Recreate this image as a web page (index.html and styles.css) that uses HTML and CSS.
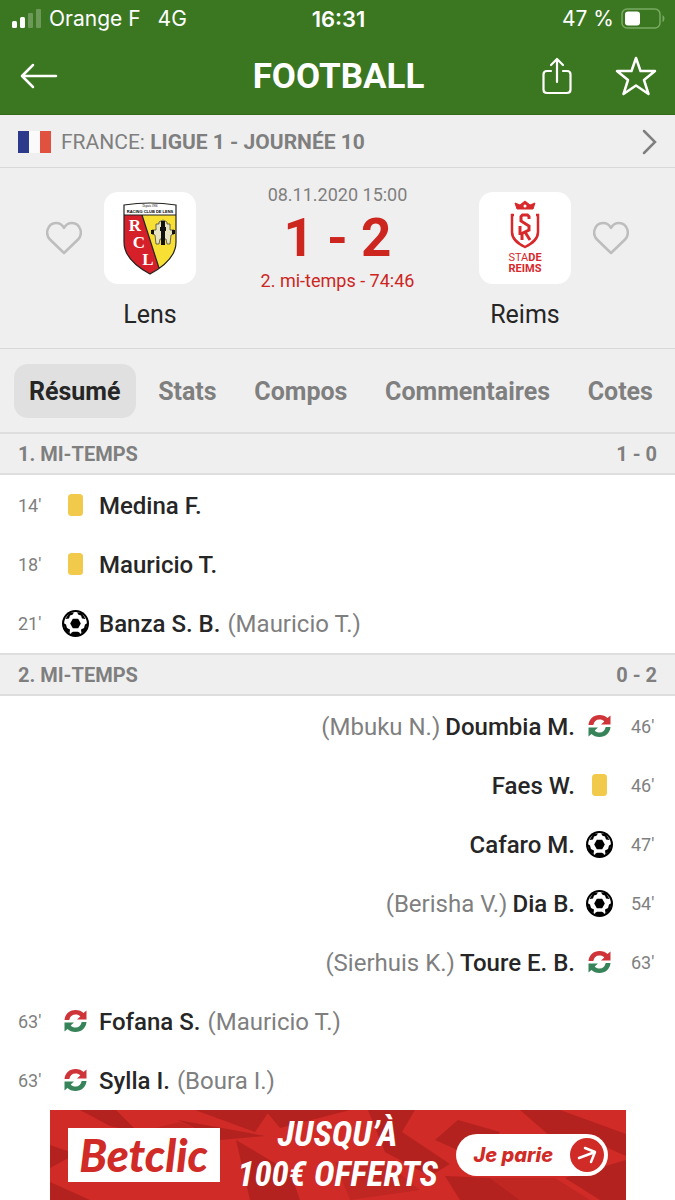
FILE: index.html
```html
<!DOCTYPE html>
<html lang="fr">

<head>
    <meta charset="UTF-8">
    <meta name="viewport" content="width=device-width, initial-scale=1.0">
    <title>Lens - Reims</title>
    <link rel="stylesheet" href="styles.css">
</head>

<body>
    <!-- shared icons -->
    <svg class="sprite" aria-hidden="true">
        <symbol id="ball" viewBox="0 0 27 27">
            <circle cx="13.5" cy="13.5" r="13.5" fill="#000" />
            <circle cx="13.5" cy="13.5" r="11.4" fill="#fff" />
            <path d="M10.800 8.800H16.200L18.800 13.500 16.200 18.200H10.800L8.200 13.500Z" />
            <path d="M7.500 2.500 12 2.500 10.500 4.800 8 5.500 7 8.500 3.500 9ZM19.500 2.500 15 2.500 16.500 4.800 19 5.500 20 8.500 23.500 9ZM1.500 13 4 14.500 5 18 8 19.500 7.500 23.500 3 20ZM25.500 13 23 14.500 22 18 19 19.500 19.500 23.500 24 20ZM11 21.800H16L18 23 17.500 26H9.500L9 23Z" />
        </symbol>
        <symbol id="swap" viewBox="0 0 22 22">
            <path d="M0 10C.5 4 5 0 11 0 14.500 0 17 1 19 3L22 .5V9.500H12.500L15.800 6.500C14.500 5 13 4.500 11 4.500 7.500 4.500 5.500 6.500 4.800 10Z" fill="#cf3439" />
            <path d="M22 12C21.500 18 17 22 11 22 7.500 22 5 21 3 19L0 21.500V12.500H9.500L6.200 15.500C7.500 17 9 17.500 11 17.500 14.500 17.500 16.500 15.500 17.200 12Z" fill="#38845a" />
        </symbol>
        <symbol id="card" viewBox="0 0 15 22">
            <rect width="15" height="22" rx="3.500" fill="#f1c94b" />
        </symbol>
        <symbol id="heart" viewBox="0 0 36 34">
            <path d="M18 32 4 18.500C1 15.500 1 11 1.500 9 2.800 4.500 6 2 10 2 13.500 2 16.500 4 18 7 19.500 4 22.500 2 26 2 30 2 33.200 4.500 34.500 9 35 11 35 15.500 32 18.500Z" fill="none" stroke="#bdbdbd" stroke-width="2.500" stroke-linejoin="round" />
        </symbol>
    </svg>

    <header class="header">
        <div class="status">
            <div class="status-side">
                <svg width="30" height="19" viewBox="0 0 30 19" fill="#fff">
                    <rect y="12" width="5" height="7" rx="1.500" />
                    <rect x="8" y="8" width="5" height="11" rx="1.500" />
                    <rect x="16" y="4" width="5" height="15" rx="1" opacity=".25" />
                    <rect x="24" width="5" height="19" rx="1" opacity=".25" />
                </svg>
                <span class="carrier">Orange F</span>
                <span>4G</span>
            </div>
            <b class="clock">16:31</b>
            <div class="status-side status-right">
                <span>47 %</span>
                <svg width="44" height="21" viewBox="0 0 44 21">
                    <rect x="1" y="1" width="38" height="19" rx="5" fill="none" stroke="#79aa62" stroke-width="1.500" />
                    <rect x="4" y="3.500" width="15" height="14" rx="3" fill="#fff" />
                    <path d="M41.500 7V14Q43.500 13 43.500 10.500T41.500 7Z" fill="#79aa62" />
                </svg>
            </div>
        </div>
        <div class="titlebar">
            <button class="icon-btn back" aria-label="Retour">
                <svg width="38" height="26" viewBox="0 0 38 26" fill="none" stroke="#fff" stroke-width="2.500" stroke-linecap="round" stroke-linejoin="round">
                    <path d="M13 2 2 13 13 24M2 13H36" />
                </svg>
            </button>
            <h1>FOOTBALL</h1>
            <div class="actions">
                <button class="icon-btn" aria-label="Partager">
                    <svg width="30" height="38" viewBox="0 0 30 38" fill="none" stroke="#fff" stroke-width="2.200" stroke-linecap="round" stroke-linejoin="round">
                        <path d="M9 14H5Q1.500 14 1.500 17.500V32.500Q1.500 36 5 36H25Q28.500 36 28.500 32.500V17.500Q28.500 14 25 14H21M15 25V2M9 8 15 2 21 8" />
                    </svg>
                </button>
                <button class="icon-btn" aria-label="Favori">
                    <svg width="42" height="42" viewBox="0 0 42 42" fill="none" stroke="#fff" stroke-width="2.500" stroke-linejoin="round">
                        <path d="M21 3 25.500 16H40L29 25 33.500 39 21 30.500 8.500 39 13 25 2 16H16.500Z" />
                    </svg>
                </button>
            </div>
        </div>
    </header>

    <a class="league" href="#">
        <svg width="33" height="22" viewBox="0 0 33 22">
            <rect width="33" height="22" fill="#fafafa" />
            <rect width="11" height="22" fill="#2c3a8c" />
            <rect x="22" width="11" height="22" fill="#e0523f" />
        </svg>
        <span class="league-name">FRANCE: <b>LIGUE 1 - JOURNÉE 10</b></span>
        <svg width="16" height="26" viewBox="0 0 16 26" fill="none" stroke="#7f7f7f" stroke-width="2.500" stroke-linecap="round">
            <path d="M2 2 13 13 2 24" />
        </svg>
    </a>

    <section class="match">
        <button class="icon-btn heart" aria-label="Suivre Lens"><svg width="36" height="34"><use href="#heart" /></svg></button>
        <div class="team">
            <div class="crest">
                <svg width="54" height="73" viewBox="0 0 54 73">
                    <path d="M1 3Q27-1 53 3V40C53 55 40 65 27 72 14 65 1 55 1 40Z" fill="#f8df34" />
                    <path d="M1 13H19L36 66 27 72C14 65 1 55 1 40Z" fill="#d5202a" />
                    <path d="M1 3Q27-1 53 3V13H1Z" fill="#fff" />
                    <path d="M1 13H53M19 13 36 66M1 3Q27-1 53 3V40C53 55 40 65 27 72 14 65 1 55 1 40Z" fill="none" stroke="#222" stroke-width="1.200" />
                    <text x="27" y="5" class="lens-since">Depuis 1906</text>
                    <text x="27" y="11" class="lens-name">RACING CLUB DE LENS</text>
                    <text x="12" y="29" class="lens-letter">R</text>
                    <text x="16" y="46" class="lens-letter">C</text>
                    <text x="25" y="63" class="lens-letter">L</text>
                    <path d="M36 20 40 18 44 20V22H47V28H51V32L48 33 47 42H44L43 37H37L36 42H33L32 33 29 32V28H33V22H36Z" fill="#e9e4c0" stroke="#444" stroke-width=".8" />
                    <path d="M38 19H42V25H43V29H42V43H38V29H37V25H38ZM28 28H31V32H28ZM49 28H52V32H49Z" fill="#111" />
                </svg>
            </div>
            <span class="team-name">Lens</span>
        </div>
        <div class="score">
            <span class="date">08.11.2020 15:00</span>
            <b class="result">1 - 2</b>
            <span class="period">2. mi-temps - 74:46</span>
        </div>
        <div class="team">
            <div class="crest">
                <svg width="40" height="76" viewBox="0 0 40 76" fill="none" stroke="#d7282b">
                    <path d="M12 9 10 3 15 5 20 1 25 5 30 3 28 9Z" fill="#d7282b" stroke-width="1" />
                    <circle cx="20" cy="6" r="1.500" fill="#fff" stroke="none" />
                    <path d="M9 15H7V32C7 39 12 43 20 47 28 43 33 39 33 32V15H31" stroke-width="2.500" />
                    <path d="M24 19V16.500L22.500 15H17.500L16 16.500V21L24 26V30L17 33.500V40M15 26V35M20 32 25 40" stroke-width="3" />
                    <text x="20" y="61" class="stade">STA<tspan font-weight="700">DE</tspan></text>
                    <text x="20" y="72" class="stade stade-reims">REIMS</text>
                </svg>
            </div>
            <span class="team-name">Reims</span>
        </div>
        <button class="icon-btn heart" aria-label="Suivre Reims"><svg width="36" height="34"><use href="#heart" /></svg></button>
    </section>

    <nav class="tabs">
        <a class="tab active" href="#">Résumé</a>
        <a class="tab" href="#">Stats</a>
        <a class="tab" href="#">Compos</a>
        <a class="tab" href="#">Commentaires</a>
        <a class="tab" href="#">Cotes</a>
    </nav>

    <main>
        <h2 class="half"><span>1. MI-TEMPS</span><span>1 - 0</span></h2>
        <ul class="events">
            <li class="event">
                <span class="minute">14'</span>
                <svg class="icon"><use href="#card" height="22" y="2" /></svg>
                <span class="player">Medina F.</span>
            </li>
            <li class="event">
                <span class="minute">18'</span>
                <svg class="icon"><use href="#card" height="22" y="2" /></svg>
                <span class="player">Mauricio T.</span>
            </li>
            <li class="event">
                <span class="minute">21'</span>
                <svg class="icon"><use href="#ball" /></svg>
                <span class="player">Banza S. B.</span>
                <span class="other">(Mauricio T.)</span>
            </li>
        </ul>

        <h2 class="half"><span>2. MI-TEMPS</span><span>0 - 2</span></h2>
        <ul class="events">
            <li class="event away">
                <span class="minute">46'</span>
                <svg class="icon"><use href="#swap" height="22" y="2" /></svg>
                <span class="player">Doumbia M.</span>
                <span class="other">(Mbuku N.)</span>
            </li>
            <li class="event away">
                <span class="minute">46'</span>
                <svg class="icon"><use href="#card" height="22" y="2" /></svg>
                <span class="player">Faes W.</span>
            </li>
            <li class="event away">
                <span class="minute">47'</span>
                <svg class="icon"><use href="#ball" /></svg>
                <span class="player">Cafaro M.</span>
            </li>
            <li class="event away">
                <span class="minute">54'</span>
                <svg class="icon"><use href="#ball" /></svg>
                <span class="player">Dia B.</span>
                <span class="other">(Berisha V.)</span>
            </li>
            <li class="event away">
                <span class="minute">63'</span>
                <svg class="icon"><use href="#swap" height="22" y="2" /></svg>
                <span class="player">Toure E. B.</span>
                <span class="other">(Sierhuis K.)</span>
            </li>
            <li class="event">
                <span class="minute">63'</span>
                <svg class="icon"><use href="#swap" height="22" y="2" /></svg>
                <span class="player">Fofana S.</span>
                <span class="other">(Mauricio T.)</span>
            </li>
            <li class="event">
                <span class="minute">63'</span>
                <svg class="icon"><use href="#swap" height="22" y="2" /></svg>
                <span class="player">Sylla I.</span>
                <span class="other">(Boura I.)</span>
            </li>
        </ul>
    </main>

    <aside class="ad">
        <svg class="ad-bg" viewBox="0 0 576 90" preserveAspectRatio="none" aria-hidden="true">
            <path d="M30 0H66L88 22 60 16ZM0 35 26 44 0 58ZM128 10 215 26 170 30ZM145 0H220L205 22ZM186 30 240 62 250 90H200ZM0 72 40 90H0ZM215 0H300L230 18ZM318 0H365L352 22 400 54 380 66 335 42ZM408 10 450 22 430 50 385 30ZM470 0H510L576 24V46L540 30 500 26ZM395 66 440 68 470 90H410ZM515 68 576 50V90H550Z" fill="#b3221f" />
            <path d="M88 22 130 12 170 30 100 28ZM285 52 335 52 370 80 300 90ZM440 68 505 68 540 90H470Z" fill="#c02722" />
        </svg>
        <span class="ad-logo">Betclic</span>
        <span class="ad-text">JUSQU’À<br>100€ OFFERTS</span>
        <button class="ad-btn">Je parie
            <svg width="34" height="34" viewBox="0 0 34 34">
                <circle cx="17" cy="17" r="17" fill="#d02b27" />
                <path d="M9 20 25 14M15 10 25 14 21 24" fill="none" stroke="#fff" stroke-width="2.500" stroke-linecap="round" stroke-linejoin="round" />
            </svg>
        </button>
    </aside>
</body>

</html>
```
FILE: styles.css
```css
* {
    box-sizing: border-box;
}

body {
    margin: 0;
    min-height: 100vh;
    display: flex;
    flex-direction: column;
    font-family: Roboto, "Liberation Sans", sans-serif;
    color: #262626;
    background-color: #fff;
}

svg {
    display: block;
    flex: none;
}

.sprite {
    display: none;
}

a {
    color: inherit;
    text-decoration: none;
}

.icon-btn {
    padding: 0;
    border: 0;
    background: none;
}

.header {
    height: 115px;
    color: #fff;
    background-color: #3b7721;
    border-bottom: 1px solid #33691c;
}

.status {
    height: 37px;
    padding: 0 10px 0 12px;
    display: grid;
    grid-template-columns: 1fr auto 1fr;
    align-items: center;
    font-family: Inter, sans-serif;
    font-size: 21px;
}

.status-side {
    display: flex;
    align-items: center;
    gap: 7px;
}

.carrier {
    margin-right: 10px;
}

.status-right {
    justify-content: flex-end;
}

.clock {
    font-size: 22px;
    font-weight: 600;
}

.titlebar {
    height: 78px;
    padding: 0 18px 0 20px;
    display: grid;
    grid-template-columns: 1fr auto 1fr;
    align-items: center;
}

.back {
    justify-self: start;
}

.titlebar h1 {
    margin: 0;
    font-size: 35px;
    font-weight: 700;
}

.actions {
    display: flex;
    align-items: center;
    justify-content: flex-end;
    gap: 43px;
}

.league {
    height: 53px;
    padding: 2px 17px 0 18px;
    display: flex;
    align-items: center;
    gap: 10px;
    font-size: 21px;
    color: #7f7f7f;
    background-color: #efefef;
    border-bottom: 1px solid #d8d8d8;
}

.league-name {
    flex: 1;
}

.match {
    height: 180px;
    padding: 24px 46px 0;
    display: flex;
    gap: 22px;
    background-color: #efefef;
}

.heart {
    height: 92px;
}

.team {
    width: 92px;
    display: flex;
    flex-direction: column;
    align-items: center;
    gap: 16px;
}

.crest {
    width: 92px;
    height: 92px;
    display: flex;
    align-items: center;
    justify-content: center;
    border-radius: 14px;
    background-color: #fff;
}

.team-name {
    font-size: 25px;
    line-height: 30px;
}

.lens-since {
    font: 3px "Liberation Serif", serif;
    text-anchor: middle;
}

.lens-name {
    font: bold 4px "Liberation Sans", sans-serif;
    text-anchor: middle;
}

.lens-letter {
    font: bold 17px "Liberation Serif", serif;
    fill: #fff;
    text-anchor: middle;
}

.stade {
    font: 11px Roboto, sans-serif;
    fill: #d7282b;
    stroke: none;
    text-anchor: middle;
}

.stade-reims {
    font-weight: 700;
}

.score {
    flex: 1;
    display: flex;
    flex-direction: column;
    align-items: center;
    color: #cd261f;
}

.date {
    font-size: 18px;
    line-height: 6px;
    color: #7f7f7f;
}

.result {
    font-size: 53px;
    line-height: 80px;
}

.period {
    font-size: 18px;
    line-height: 6px;
}

.tabs {
    height: 84px;
    padding: 0 7px 0 14px;
    display: flex;
    align-items: center;
    justify-content: space-between;
    font-size: 25px;
    font-weight: 700;
    color: #7f7f7f;
    background-color: #efefef;
    border-top: 1px solid #d8d8d8;
}

.tab {
    height: 54px;
    padding: 0 15px;
    line-height: 56px;
    border-radius: 14px;
}

.active {
    color: #262626;
    background-color: #e0e0e0;
}

.half {
    height: 43px;
    margin: 0;
    padding: 0 18px;
    display: flex;
    align-items: center;
    justify-content: space-between;
    font-size: 20px;
    font-weight: 700;
    color: #7f7f7f;
    background-color: #efefef;
    border: solid #dedede;
    border-width: 2px 0;
}

.events {
    margin: 0;
    padding: 1px 18px 0;
    list-style: none;
}

.event {
    height: 59px;
    display: flex;
    align-items: center;
    font-size: 24px;
}

.away {
    flex-direction: row-reverse;
}

.minute {
    width: 26px;
    font-size: 18px;
    color: #7f7f7f;
}

.icon {
    width: 27px;
    height: 27px;
    margin: 0 10px 0 18px;
}

.away .icon {
    margin: 0 18px 0 11px;
}

.player {
    font-weight: 500;
}

.other {
    margin: 0 7px;
    color: #7f7f7f;
}

.away .other {
    margin: 0 5px;
}

.ad {
    width: 576px;
    max-width: 100%;
    height: 90px;
    margin: auto auto 0;
    padding: 0 18px;
    position: relative;
    display: flex;
    align-items: center;
    justify-content: space-between;
    font-style: italic;
    font-weight: 700;
    color: #fff;
    background-color: #d02b27;
}

.ad-bg {
    position: absolute;
    inset: 0;
    width: 100%;
    height: 100%;
}

.ad-logo,
.ad-text,
.ad-btn {
    position: relative;
}

.ad-logo {
    width: 152px;
    height: 54px;
    font-family: Lato, sans-serif;
    font-size: 45px;
    font-weight: 900;
    line-height: 54px;
    text-align: center;
    color: #d02b27;
    background-color: #fff;
}

.ad-text {
    font-family: "Roboto Condensed", Roboto, sans-serif;
    font-size: 35px;
    line-height: 40px;
    text-align: center;
    white-space: nowrap;
}

.ad-btn {
    width: 152px;
    height: 42px;
    padding: 0 4px 0 18px;
    display: flex;
    align-items: center;
    justify-content: space-between;
    font: italic 800 20px Inter, sans-serif;
    color: #d02b27;
    background-color: #fff;
    border: 0;
    border-radius: 21px;
}
```
